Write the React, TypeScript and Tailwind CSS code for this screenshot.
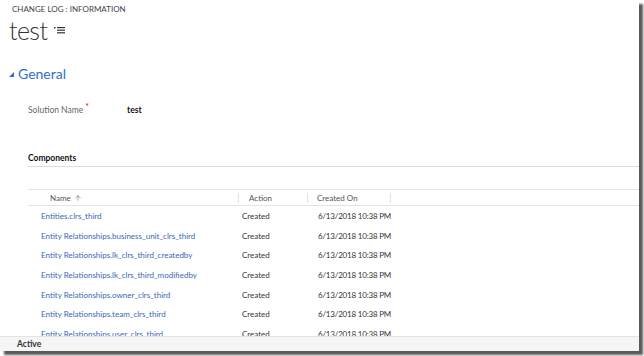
import { ArrowUp } from 'lucide-react';

const rows = [
  'Entities.clrs_third',
  'Entity Relationships.business_unit_clrs_third',
  'Entity Relationships.lk_clrs_third_createdby',
  'Entity Relationships.lk_clrs_third_modifiedby',
  'Entity Relationships.owner_clrs_third',
  'Entity Relationships.team_clrs_third',
  'Entity Relationships.user_clrs_third',
];

function MenuGlyph() {
  return (
    <svg width="11" height="8" viewBox="0 0 11 8" className="ml-[7px] mt-[11px]">
      <rect x="0" y="1" width="1.5" height="1.5" fill="#333" />
      <rect x="3" y="1" width="8" height="1.2" fill="#333" />
      <rect x="3" y="3.6" width="8" height="1.2" fill="#333" />
      <rect x="3" y="6.2" width="8" height="1.2" fill="#333" />
    </svg>
  );
}

export default function App() {
  return (
    <div className="w-[644px] h-[356px] bg-white font-['Lato',sans-serif]">
      <div className="w-[639px] h-[351px] bg-white flex flex-col overflow-hidden shadow-[4px_4px_2px_rgba(0,0,0,0.65)]">
        <div className="pl-[12px] pt-[4px] text-[8px] leading-[10px] text-[#444]">
          CHANGE LOG : INFORMATION
        </div>
        <div className="flex items-start pl-[9px] mt-[1px] h-[30px]">
          <span className="text-[25px] leading-[30px] font-light tracking-[-0.6px] text-[#333]">test</span>
          <MenuGlyph />
        </div>

        <div className="flex items-center pl-[9px] mt-[21px] h-[16px]">
          <svg width="5" height="5" viewBox="0 0 5 5" className="mr-[4px] mt-[1px]">
            <polygon points="5,0 5,5 0,5" fill="#2f6fcf" />
          </svg>
          <span className="text-[14px] leading-[16px] text-[#2f6fcf]">General</span>
        </div>

        <div className="flex items-center pl-[28px] mt-[22px] h-[12px] text-[8.5px]">
          <span className="text-[#666]">Solution Name</span>
          <span className="text-[#e00] text-[9px] ml-[2px] -mt-[6px]">*</span>
          <span className="ml-[38px] font-bold text-[#111]">test</span>
        </div>

        <div className="ml-[28px] mt-[37px] h-[14px] border-b border-[#dcdcdc] text-[8.5px] font-bold text-[#111] leading-[10px]">
          Components
        </div>

        <div className="ml-[28px] mt-[22px] flex-1 flex flex-col min-h-0">
          <div className="flex items-center h-[17px] border-t border-b border-[#e3e3e3] text-[8px] text-[#555]">
            <div className="w-[211px] flex items-center pl-[22px] border-r border-[#e3e3e3] h-[10px]">
              Name
              <ArrowUp className="w-[8px] h-[8px] ml-[3px] text-[#555]" strokeWidth={1.5} />
            </div>
            <div className="w-[69px] pl-[10px] border-r border-[#e3e3e3] h-[10px] flex items-center">Action</div>
            <div className="w-[83px] pl-[9px] border-r border-[#e3e3e3] h-[10px] flex items-center">Created On</div>
          </div>
          <div className="flex-1 overflow-hidden">
            {rows.map((name) => (
              <div key={name} className="flex items-center h-[19.7px] text-[8px]">
                <div className="w-[214px] pl-[13px] text-[#3b66b5] whitespace-nowrap">{name}</div>
                <div className="w-[76px] text-[#333]">Created</div>
                <div className="text-[#333] tracking-[-0.2px]">6/13/2018 10:38 PM</div>
              </div>
            ))}
          </div>
        </div>

        <div className="h-[15px] shrink-0 bg-[#f5f5f5] border-t border-[#e3e3e3] flex items-center pl-[17px] text-[8.5px] font-bold text-[#333]">
          Active
        </div>
      </div>
    </div>
  );
}
